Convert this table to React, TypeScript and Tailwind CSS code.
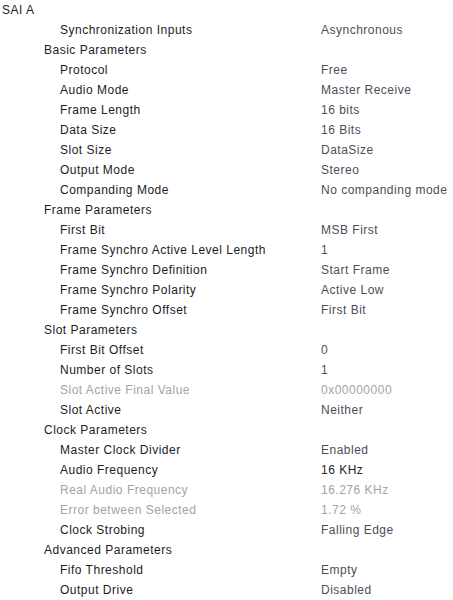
import React from "react";

type Row = { label: string; value?: string; level: 0 | 1 | 2; kind?: "dis" | "dark" };

const rows: Row[] = [
  { label: "SAI A", level: 0 },
  { label: "Synchronization Inputs", value: "Asynchronous", level: 2 },
  { label: "Basic Parameters", level: 1 },
  { label: "Protocol", value: "Free", level: 2 },
  { label: "Audio Mode", value: "Master Receive", level: 2 },
  { label: "Frame Length", value: "16 bits", level: 2 },
  { label: "Data Size", value: "16 Bits", level: 2 },
  { label: "Slot Size", value: "DataSize", level: 2 },
  { label: "Output Mode", value: "Stereo", level: 2 },
  { label: "Companding Mode", value: "No companding mode", level: 2 },
  { label: "Frame Parameters", level: 1 },
  { label: "First Bit", value: "MSB First", level: 2 },
  { label: "Frame Synchro Active Level Length", value: "1", level: 2 },
  { label: "Frame Synchro Definition", value: "Start Frame", level: 2 },
  { label: "Frame Synchro Polarity", value: "Active Low", level: 2 },
  { label: "Frame Synchro Offset", value: "First Bit", level: 2 },
  { label: "Slot Parameters", level: 1 },
  { label: "First Bit Offset", value: "0", level: 2 },
  { label: "Number of Slots", value: "1", level: 2 },
  { label: "Slot Active Final Value", value: "0x00000000", level: 2, kind: "dis" },
  { label: "Slot Active", value: "Neither", level: 2 },
  { label: "Clock Parameters", level: 1 },
  { label: "Master Clock Divider", value: "Enabled", level: 2 },
  { label: "Audio Frequency", value: "16 KHz", level: 2, kind: "dark" },
  { label: "Real Audio Frequency", value: "16.276 KHz", level: 2, kind: "dis" },
  { label: "Error between Selected", value: "1.72 %", level: 2, kind: "dis" },
  { label: "Clock Strobing", value: "Falling Edge", level: 2 },
  { label: "Advanced Parameters", level: 1 },
  { label: "Fifo Threshold", value: "Empty", level: 2 },
  { label: "Output Drive", value: "Disabled", level: 2 },
];

export default function App() {
  return (
    <div
      className="w-[453px] h-[600px] bg-white text-[12px] leading-[20px] tracking-[0.5px] overflow-hidden"
      style={{ fontFamily: '"Liberation Sans", Arial, sans-serif' }}
    >
      {rows.map((r, i) => {
        const pad = r.level === 0 ? "pl-[2px]" : r.level === 1 ? "pl-[44px]" : "pl-[60px]";
        const labelColor = r.kind === "dis" ? "text-[#a3a3a3]" : "text-[#1c1c24]";
        const valueColor =
          r.kind === "dis" ? "text-[#a3a3a3]" : r.kind === "dark" ? "text-[#24242c]" : "text-[#4c4c5a]";
        return (
          <div key={i} className="flex h-[20px] items-center">
            <div className={`w-[321px] shrink-0 whitespace-nowrap ${pad} ${labelColor}`}>{r.label}</div>
            {r.value && <div className={`whitespace-nowrap ${valueColor}`}>{r.value}</div>}
          </div>
        );
      })}
    </div>
  );
}
